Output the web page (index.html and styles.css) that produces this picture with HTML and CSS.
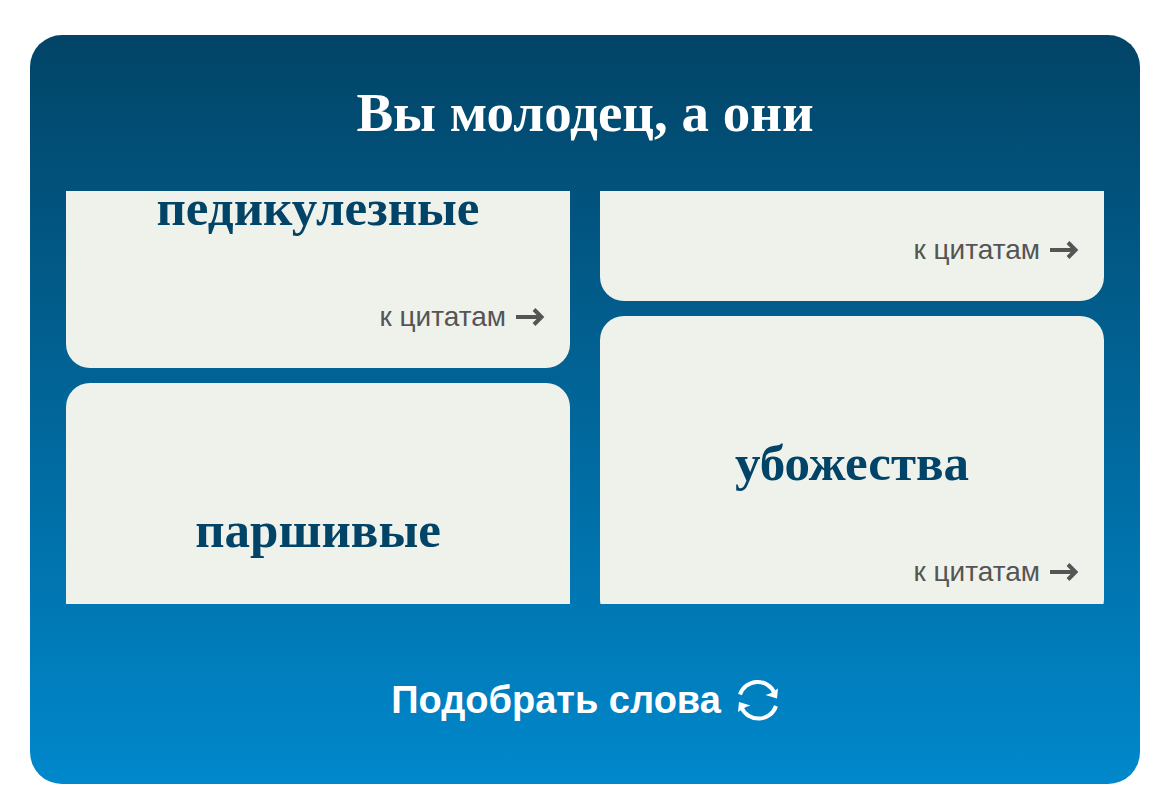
FILE: index.html
```html
<!DOCTYPE html>
<html lang="ru">
<head>
<meta charset="utf-8">
<title>Вы молодец, а они</title>
<link rel="stylesheet" href="styles.css">
</head>
<body>
<main class="panel">
  <h1 class="title">Вы молодец, а они</h1>
  <div class="reels">
    <div class="reel reel-left">
      <article class="card">
        <h2 class="word">педикулезные</h2>
        <a class="quotes" href="#">к цитатам <svg class="arrow" viewBox="0 0 30 20" aria-hidden="true"><path d="M0 10H25M18 2.500L25.500 10 18 17.500"/></svg></a>
      </article>
      <article class="card">
        <h2 class="word">паршивые</h2>
      </article>
    </div>
    <div class="reel reel-right">
      <article class="card">
        <a class="quotes" href="#">к цитатам <svg class="arrow" viewBox="0 0 30 20" aria-hidden="true"><path d="M0 10H25M18 2.500L25.500 10 18 17.500"/></svg></a>
      </article>
      <article class="card">
        <h2 class="word">убожества</h2>
        <a class="quotes" href="#">к цитатам <svg class="arrow" viewBox="0 0 30 20" aria-hidden="true"><path d="M0 10H25M18 2.500L25.500 10 18 17.500"/></svg></a>
      </article>
    </div>
  </div>
  <button class="shuffle" type="button">Подобрать слова
    <svg class="refresh" viewBox="0 0 42 42" aria-hidden="true"><path class="arc" d="M3 15.500A18.500 18.500 0 0 1 37.500 14M39 27A18.500 18.500 0 0 1 4.500 28.500"/><path class="tip" d="M41 9.500L40 19.500 28.500 16 33 14.500 38 11.500zM1 33L2 23 13.500 26.500 9 28 4 31z"/></svg>
  </button>
</main>
</body>
</html>
```
FILE: styles.css
```css
* {
  box-sizing: border-box;
}

body {
  margin: 0;
  padding: 35px 30px 27px;
  background: #fff;
  font-family: "Liberation Sans", Arial, sans-serif;
}

.panel {
  display: flex;
  flex-direction: column;
  align-items: center;
  padding: 40px 36px 58px;
  border-radius: 32px;
  background: linear-gradient(#024467, #0088cc);
  color: #fff;
}

.title {
  margin: 0 0 40px;
  font: 700 55px/76px "Liberation Serif", "Times New Roman", serif;
}

.reels {
  display: grid;
  grid-template-columns: 1fr 1fr;
  gap: 30px;
  width: 100%;
  height: 413px;
  overflow: hidden;
}

.reel {
  display: flex;
  flex-direction: column;
  gap: 15px;
}

.reel-left {
  margin-top: -130px;
}

.reel-right {
  margin-top: -197px;
}

.card {
  display: flex;
  flex-direction: column;
  flex: none;
  height: 307px;
  padding: 109px 24px 32px;
  border-radius: 24px;
  background: #eef2eb;
}

.word {
  margin: 0;
  color: #024467;
  font: 700 51px/76px "Liberation Serif", "Times New Roman", serif;
  text-align: center;
}

.quotes {
  display: flex;
  align-items: center;
  gap: 10px;
  margin-top: auto;
  align-self: flex-end;
  color: #555;
  font-size: 28px;
  line-height: 38px;
  text-decoration: none;
}

.arrow {
  width: 30px;
  height: 20px;
  fill: none;
  stroke: currentColor;
  stroke-width: 4;
}

.shuffle {
  display: flex;
  align-items: center;
  gap: 16px;
  margin-top: 70px;
  padding: 0;
  border: 0;
  background: none;
  color: #fff;
  font: 700 38px/52px "Liberation Sans", Arial, sans-serif;
}

.refresh {
  width: 42px;
  height: 42px;
}

.arc {
  fill: none;
  stroke: #fff;
  stroke-width: 4;
}

.tip {
  fill: #fff;
}
```
